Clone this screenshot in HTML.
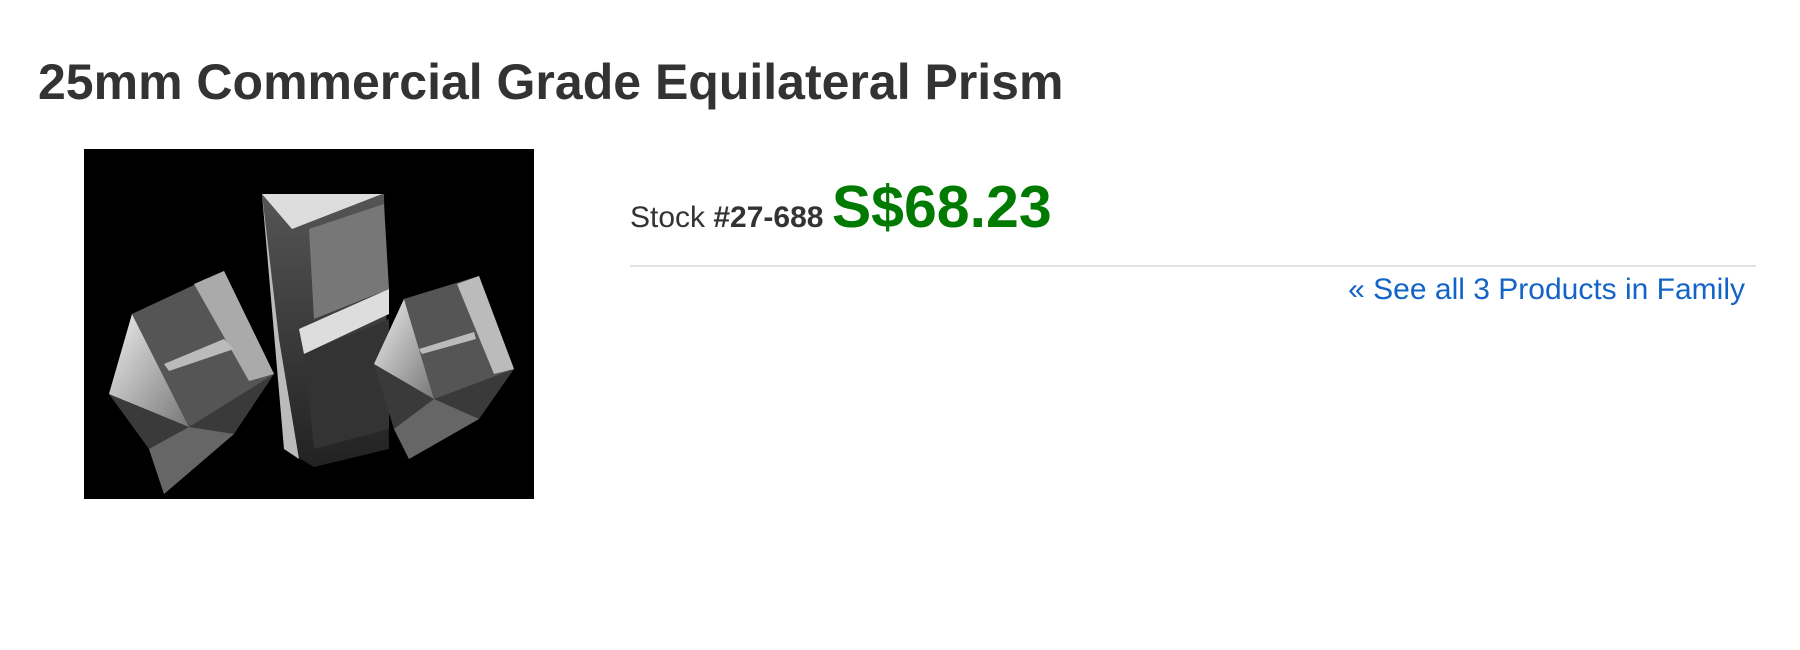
<!DOCTYPE html>
<html><head><meta charset="utf-8"><style>
body{margin:0;background:#fff;width:1800px;height:650px;overflow:hidden;font-family:"Liberation Sans",Arial,sans-serif;position:relative}
h1{position:absolute;left:38px;top:57px;margin:0;font-size:50px;font-weight:bold;color:#333;white-space:nowrap;line-height:1}
#img{position:absolute;left:84px;top:149px;width:450px;height:350px;background:#000}
.stock{position:absolute;left:630px;top:177px;white-space:nowrap;color:#333;font-size:30px;line-height:60px}
.stock b{font-weight:bold}
.price{color:#007a00;font-weight:bold;font-size:59px;vertical-align:baseline}
hr{position:absolute;left:630px;top:265px;width:1126px;margin:0;border:0;border-top:2px solid #e2e2e2}
.link{position:absolute;right:55px;top:273px;font-size:30px;color:#1464c8;white-space:nowrap}
</style></head><body>
<h1>25mm Commercial Grade Equilateral Prism</h1>
<div id="img"><svg width="450" height="350" viewBox="0 0 450 350">
<defs>
<linearGradient id="g1" x1="0" y1="0" x2="1" y2="1"><stop offset="0" stop-color="#eee"/><stop offset="1" stop-color="#777"/></linearGradient>
<linearGradient id="g2" x1="0" y1="0" x2="0" y2="1"><stop offset="0" stop-color="#555"/><stop offset="1" stop-color="#222"/></linearGradient>
</defs>
<polygon points="178,45 300,45 305,300 230,318 200,300" fill="url(#g2)"/>
<polygon points="178,45 200,300 215,310 195,190" fill="#bbb"/>
<polygon points="178,45 298,45 208,80" fill="#ddd"/>
<polygon points="225,80 300,55 305,140 230,170" fill="#777"/>
<polygon points="215,180 305,140 305,165 220,205" fill="#ddd"/>
<polygon points="220,205 305,170 305,280 230,300" fill="#333"/>
<polygon points="25,245 48,165 140,122 190,225 150,285 80,345 65,300" fill="#3a3a3a"/>
<polygon points="25,245 48,165 105,278" fill="url(#g1)"/>
<polygon points="48,165 140,122 190,225 105,278" fill="#555"/>
<polygon points="110,135 140,122 190,225 165,232" fill="#aaa"/>
<polygon points="80,215 140,190 150,200 85,222" fill="#bbb"/>
<polygon points="65,300 105,278 150,285 80,345" fill="#666"/>
<polygon points="290,215 320,150 395,127 430,220 395,270 325,310 310,280" fill="#3a3a3a"/>
<polygon points="290,215 320,150 350,250" fill="url(#g1)"/>
<polygon points="320,150 395,127 430,220 350,250" fill="#555"/>
<polygon points="373,135 395,127 430,220 410,225" fill="#bbb"/>
<polygon points="335,200 390,183 392,190 338,205" fill="#bbb"/>
<polygon points="310,280 350,250 395,270 325,310" fill="#666"/>
</svg></div>
<div class="stock">Stock <b>#27-688</b> <span class="price">S$68.23</span></div>
<hr>
<div class="link">« See all 3 Products in Family</div>
</body></html>
